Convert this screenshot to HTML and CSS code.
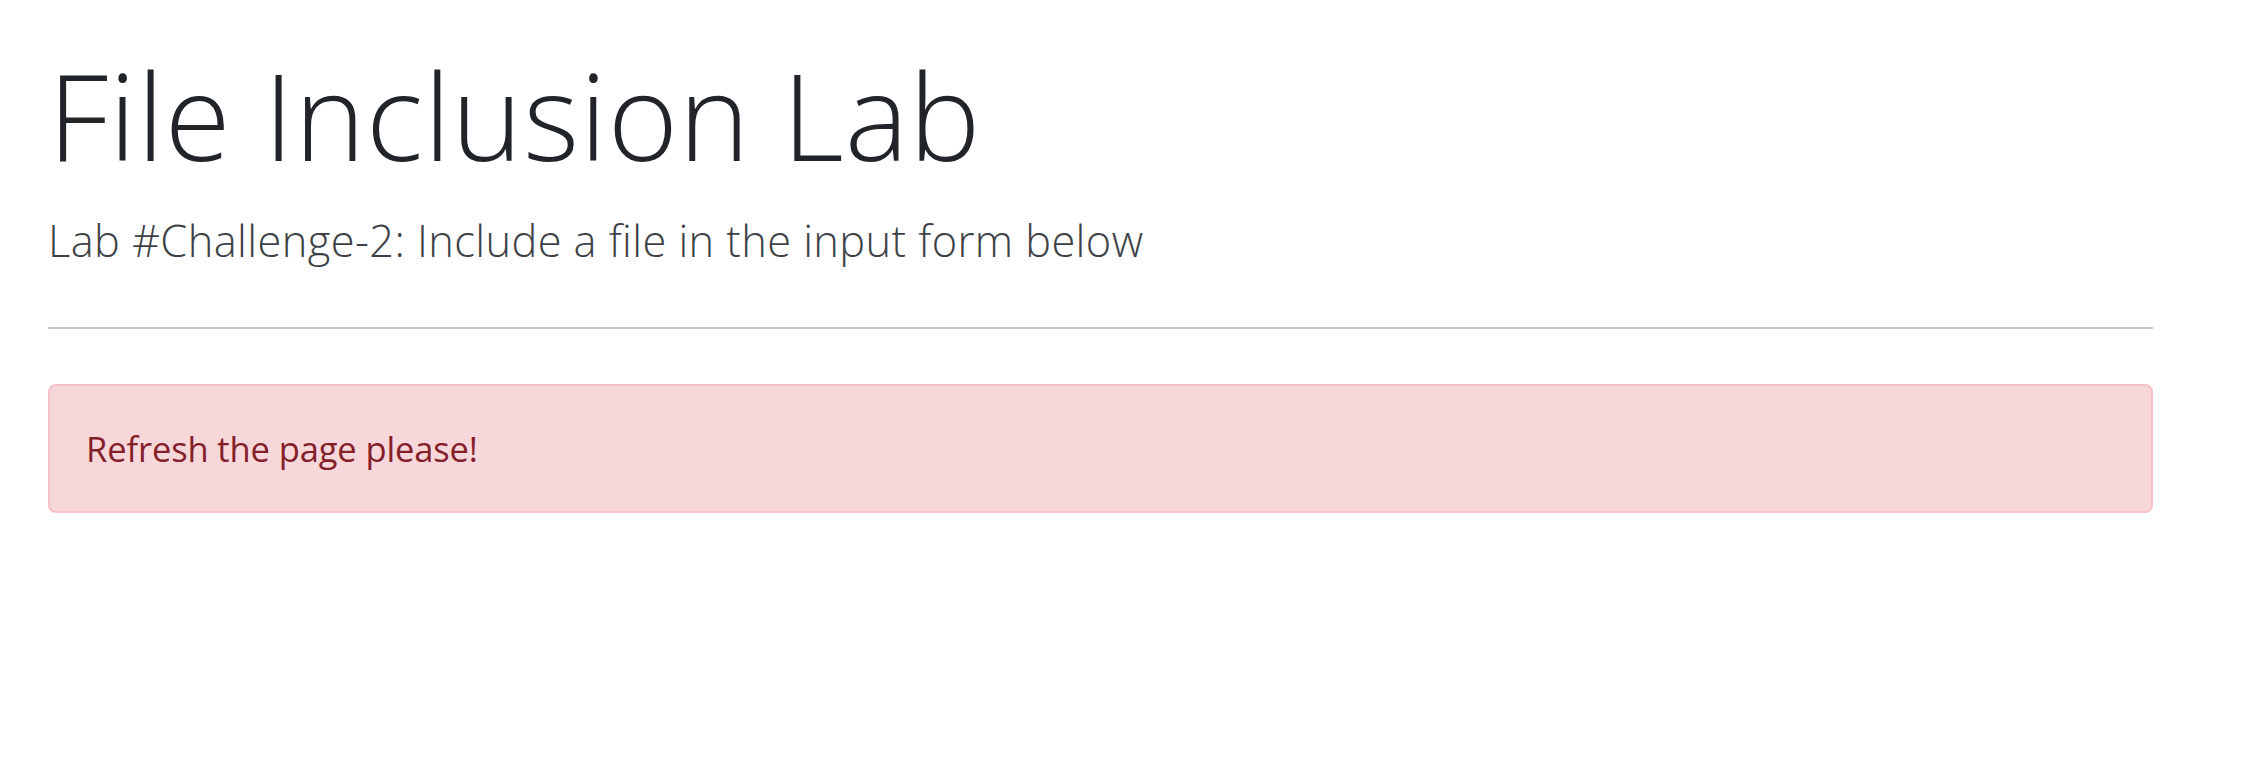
FILE: index.html
```html
<!DOCTYPE html>
<html lang="en">
<head>
<meta charset="utf-8">
<title>File Inclusion Lab</title>
<link rel="stylesheet" href="styles.css">
</head>
<body>
<main class="container">
  <h1 class="title">File Inclusion Lab</h1>
  <p class="lead">Lab #Challenge-2: Include a file in the input form below</p>
  <hr class="divider">
  <div class="alert">Refresh the page please!</div>
</main>
</body>
</html>
```

FILE: styles.css
```css
html, body {
  margin: 0;
  padding: 0;
  background: #ffffff;
}

body {
  font-family: "Open Sans", "Liberation Sans", sans-serif;
  color: #212529;
}

.container {
  width: 2105px;
  margin-left: 48px;
  padding-top: 39px;
}

.title {
  margin: 0 0 17px 0;
  font-size: 120px;
  font-weight: 300;
  line-height: 151px;
  letter-spacing: 0.75px;
  color: #212529;
}

.lead {
  margin: 0;
  font-size: 43.4px;
  font-weight: 300;
  line-height: 67px;
  letter-spacing: 0.4px;
  color: #3d4146;
}

.divider {
  margin: 53px 0 0 0;
  border: 0;
  height: 2px;
  background: #c8c9ca;
}

.alert {
  margin-top: 55px;
  padding: 36px 36px;
  border: 2px solid #f5c2c7;
  border-radius: 8px;
  background: #f8d7da;
  color: #842029;
  font-size: 34.5px;
  line-height: 53px;
  letter-spacing: -0.12px;
}
```
